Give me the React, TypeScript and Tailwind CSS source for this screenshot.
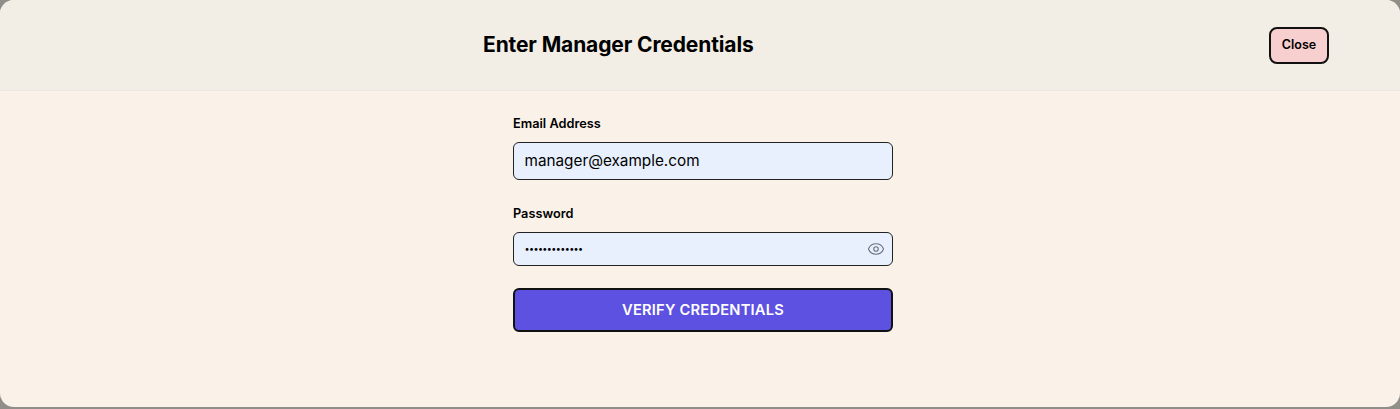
import { Eye } from "lucide-react";

export default function App() {
  return (
    <div className="h-[409px] w-[1400px] overflow-hidden bg-[#8f8e88] font-['Inter',sans-serif] text-black">
      <div className="flex h-[407px] flex-col overflow-hidden rounded-[14px] bg-[#faf2e8]">
        <header className="flex h-[91px] shrink-0 items-center justify-between border-b border-[#ebe6df] bg-[#f2eee6] pl-[483px] pr-[71px]">
          <h2 className="text-[21px] leading-7 font-bold tracking-[-0.12px]">Enter Manager Credentials</h2>
          <button
            type="button"
            className="h-[37px] w-[60px] rounded-lg border-2 border-[#111] bg-[#f8cfcf] text-[12.5px] font-semibold"
          >
            Close
          </button>
        </header>
        <form className="ml-[513px] flex w-[380px] flex-col pt-[24px]">
          <label className="mb-[10px] text-[12.75px] leading-[17px] font-semibold">Email Address</label>
          <input
            readOnly
            value="manager@example.com"
            className="h-[38px] w-full rounded-md border-[1.5px] border-[#222] bg-[#e8f0fe] px-[10.5px] pb-[2px] text-[15.3px] text-black outline-none"
          />
          <label className="mt-[25px] mb-[10px] text-[12.75px] leading-[17px] font-semibold">Password</label>
          <div className="relative">
            <input
              readOnly
              type="password"
              value="manager123456"
              className="h-[34px] w-full rounded-md border-[1.5px] border-[#222] bg-[#e8f0fe] px-[10.5px] pb-[1px] text-[9px] tracking-[-0.6px] text-black outline-none"
            />
            <Eye className="absolute top-[7.5px] right-[8px] h-[18px] w-[18px] text-[#6b7280]" strokeWidth={1.5} />
          </div>
          <button
            type="button"
            className="mt-[22px] h-[44px] w-full rounded-md border-2 border-[#111] bg-[#5d51e2] text-[14.7px] font-semibold tracking-[0.2px] text-white"
          >
            VERIFY CREDENTIALS
          </button>
        </form>
      </div>
    </div>
  );
}
